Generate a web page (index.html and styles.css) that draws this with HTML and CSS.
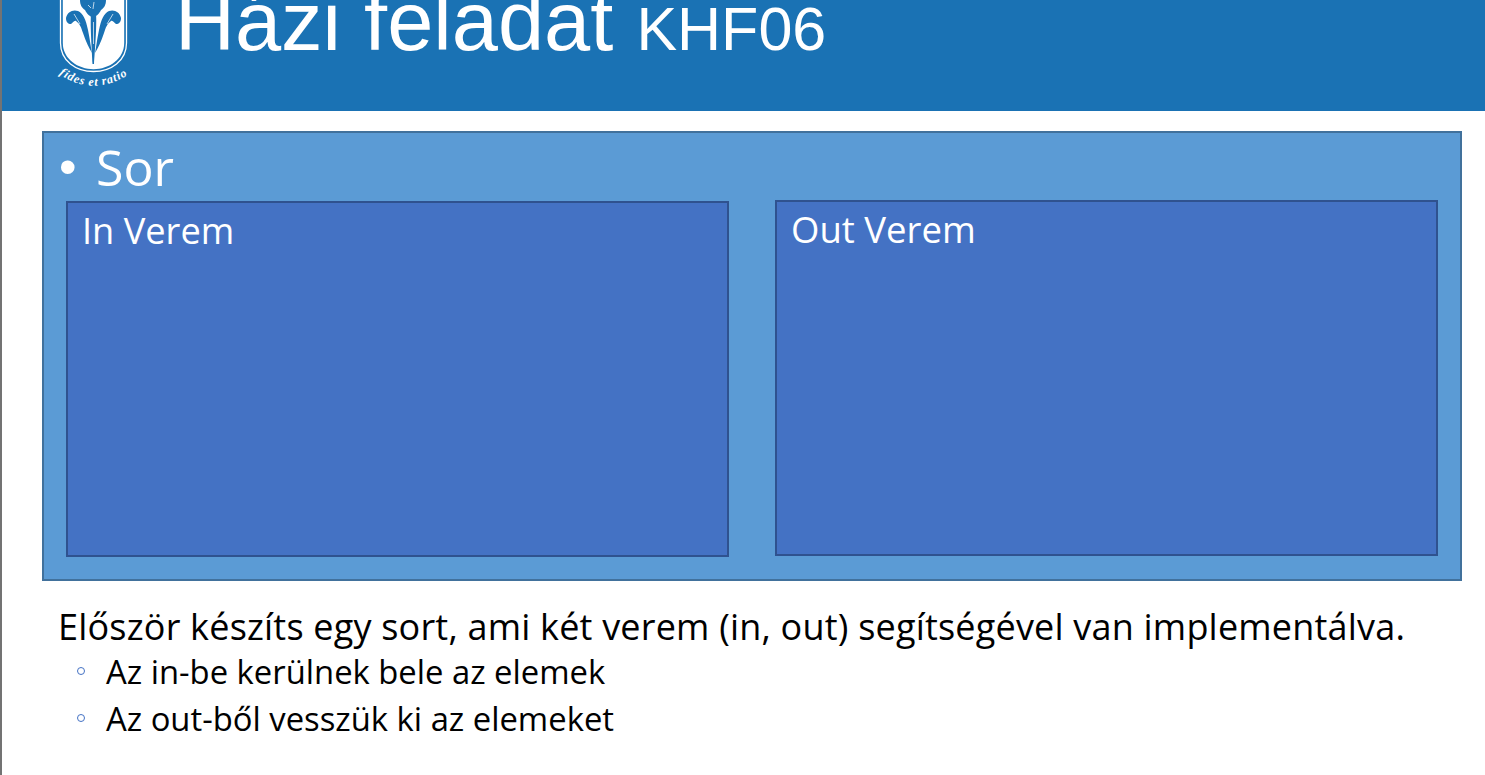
FILE: index.html
```html
<!DOCTYPE html>
<html lang="en">
<head>
  <meta charset="UTF-8">
  <title>Házi feladat KHF06</title>
  <link rel="stylesheet" href="styles.css">
</head>
<body>
  <div class="slide">
    <!-- Header band, the title is cut off by the top edge -->
    <header class="band">
      <svg class="logo" width="90" height="92" viewBox="0 0 90 92">
        <path class="shield" d="M10.500 -4V43C10.500 61 26 71.500 43.500 71.500C61 71.500 76.500 61 76.500 43V-4"/>
        <path class="shield-in" d="M12.800 -4V43C12.800 59 28 69.200 43.500 69.200C59 69.200 74.200 59 74.200 43V-4Z"/>
        <g class="plant">
          <path d="M30 0C30 5 32 8 35 10C37 14 40 17 43 17C46 17 49 14 51 10C54 8 56 5 56 0Z"/>
          <path d="M16 18C17 12 23 9 28 11C33 13 36 20 38 30C40 40 41 48 42 53C39 48 36 42 33 33C31 27 30 24 26 21C24 20 23 23 21 24C18 24 16 22 16 18Z"/>
          <path d="M71 18C70 12 64 9 59 11C54 13 51 20 49 30C47 40 46 48 45 53C48 48 51 42 54 33C56 27 57 24 61 21C63 20 64 23 66 24C69 24 71 22 71 18Z"/>
          <path d="M41 14H46C47 25 45 50 44 64H42.500C42 50 40 25 41 14Z"/>
        </g>
        <g class="veins">
          <path d="M44 2L43 9M38 5L41 8M24 14L30 24M63 14L57 24M43.500 22V44"/>
        </g>
        <path id="motto-arc" class="arc" d="M9 74Q44 98 81 73"/>
        <text class="motto"><textPath href="#motto-arc">fides et ratio</textPath></text>
      </svg>
      <h1 class="title">Házi feladat <span class="code">KHF06</span></h1>
    </header>

    <!-- Queue diagram -->
    <section class="queue">
      <div class="queue-title"><span class="dot">•</span>Sor</div>
      <div class="stacks">
        <div class="stack">In Verem</div>
        <div class="stack stack-out">Out Verem</div>
      </div>
    </section>

    <!-- Notes under the diagram -->
    <div class="notes">
      <p>Először készíts egy sort, ami két verem (in, out) segítségével van implementálva.</p>
      <ul>
        <li>Az in-be kerülnek bele az elemek</li>
        <li>Az out-ből vesszük ki az elemeket</li>
      </ul>
    </div>
  </div>
</body>
</html>
```

FILE: styles.css
```css
html, body {
  margin: 0;
  height: 100%;
  overflow: hidden;
}

body {
  background-color: #fff;
  font-family: "Open Sans", Lato, sans-serif;
}

.slide {
  height: 775px;
  border-left: 2px solid #737373;
  box-sizing: border-box;
}

.band {
  height: 111px;
  background-color: #1a72b4;
  display: flex;
  align-items: flex-end;
  overflow: hidden;
  padding-left: 48px;
  box-sizing: border-box;
}

.logo {
  flex: none;
  margin-bottom: 19px;
}

.shield {
  fill: none;
  stroke: #fff;
  stroke-width: 1.3;
}

.shield-in {
  fill: #fff;
}

.plant path {
  fill: #1a72b4;
}

.veins path {
  fill: none;
  stroke: #fff;
  stroke-width: 0.7;
}

.arc {
  fill: none;
}

.motto {
  font-family: "Liberation Serif", serif;
  font-style: italic;
  font-weight: bold;
  font-size: 12px;
  letter-spacing: 0.9px;
  fill: #fff;
}

.title {
  margin: 0 0 59px 35px;
  font-family: "Liberation Sans", Arial, sans-serif;
  font-weight: normal;
  font-size: 83px;
  line-height: 60px;
  height: 60px;
  white-space: pre;
  color: #fff;
}

.code {
  font-size: 61px;
}

.queue {
  margin: 20px 23px 0 40px;
  height: 450px;
  box-sizing: border-box;
  background-color: #5b9bd5;
  border: 2px solid #41719c;
  padding: 0 22px 0 22px;
}

.queue-title {
  display: flex;
  align-items: center;
  height: 68px;
  color: #fff;
  font-size: 50px;
}

.dot {
  width: 37px;
  margin-left: -7px;
  font-family: "Liberation Sans", Arial, sans-serif;
}

.stacks {
  display: grid;
  grid-template-columns: 663px 663px;
  justify-content: space-between;
}

.stack {
  height: 356px;
  box-sizing: border-box;
  background-color: #4472c4;
  border: 2px solid #2f528f;
  padding: 2px 14px;
  color: #fff;
  font-size: 36.200px;
}

.stack-out {
  margin-top: -1px;
  font-size: 36.500px;
}

.notes {
  margin: 25px 0 0 56px;
  color: #000;
}

.notes p {
  margin: 0;
  font-size: 36px;
  line-height: 42px;
  letter-spacing: 0.2px;
}

.notes ul {
  margin: 0;
  padding: 0 0 0 48px;
  list-style: none;
}

.notes li {
  position: relative;
  font-size: 32.800px;
  line-height: 47px;
}

.notes li::before {
  content: "";
  position: absolute;
  left: -29px;
  top: 19px;
  width: 6px;
  height: 6px;
  border: 1.300px solid #4472c4;
  border-radius: 50%;
}
```
